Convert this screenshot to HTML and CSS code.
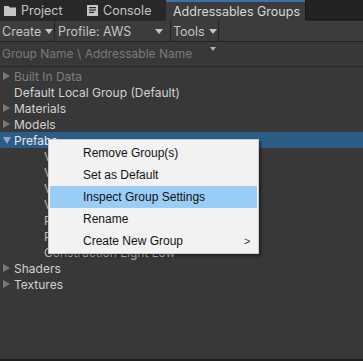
FILE: index.html
```html
<!DOCTYPE html>
<html>
<head>
<meta charset="utf-8">
<link rel="stylesheet" href="styles.css">
</head>
<body>
<div class="window">
  <div class="tabbar">
    <div class="tab">
      <svg class="ticon" width="12" height="10" viewBox="0 0 12 10"><path d="M0 0h4.5l1.5 1.5H12V10H0z" fill="#c4c4c4"/></svg>
      <span>Project</span>
    </div>
    <div class="tab">
      <svg class="ticon" width="11" height="11" viewBox="0 0 11 11"><rect x="0" y="0" width="11" height="11" fill="#c4c4c4"/><rect x="2" y="2" width="7" height="1.2" fill="#282828"/><rect x="2" y="4.4" width="7" height="1.2" fill="#282828"/><rect x="2" y="6.8" width="5" height="1.2" fill="#282828"/></svg>
      <span>Console</span>
    </div>
    <div class="tab active"><span>Addressables Groups</span></div>
    <div class="tabfill"></div>
  </div>
  <div class="toolbar">
    <div class="tbtn create">Create<i class="caret"></i></div>
    <div class="tbtn profile"><span>Profile: AWS</span><i class="caret"></i></div>
    <div class="tbtn tools">Tools<i class="caret"></i></div>
  </div>
  <div class="header">
    <span>Group Name \ Addressable Name</span>
    <i class="sort"></i>
  </div>
  <div class="tree">
    <div class="row dim"><i class="arrow"></i>Built In Data</div>
    <div class="row"><i class="noarrow"></i>Default Local Group (Default)</div>
    <div class="row"><i class="arrow"></i>Materials</div>
    <div class="row"><i class="arrow"></i>Models</div>
    <div class="row selected"><i class="arrow down"></i>Prefabs</div>
    <div class="row child">Vehicle</div>
    <div class="row child">Vehicle</div>
    <div class="row child">Vehicle</div>
    <div class="row child">Vehicle</div>
    <div class="row child">Prop</div>
    <div class="row child">Prop</div>
    <div class="row child">Construction Light Low</div>
    <div class="row"><i class="arrow"></i>Shaders</div>
    <div class="row"><i class="arrow"></i>Textures</div>
  </div>
  <div class="menu">
    <div class="mitem">Remove Group(s)</div>
    <div class="mitem">Set as Default</div>
    <div class="mitem hl">Inspect Group Settings</div>
    <div class="mitem">Rename</div>
    <div class="mitem sub">Create New Group<span class="chev">&gt;</span></div>
  </div>
</div>
</body>
</html>
```
FILE: styles.css
```css
html, body {
  margin: 0;
  padding: 0;
  background: #383838;
}
.window {
  position: relative;
  width: 363px;
  height: 361px;
  overflow: hidden;
  background: #383838;
  font-family: Inter, "Noto Sans", sans-serif;
  font-size: 12px;
  color: #d2d2d2;
  display: flex;
  flex-direction: column;
  border-bottom: 2px solid #1e1e1e;
  box-sizing: border-box;
}
.tabbar {
  height: 21px;
  display: flex;
  background: #282828;
  flex: none;
}
.tab {
  width: 83px;
  display: flex;
  align-items: center;
  gap: 5px;
  padding-left: 4px;
  box-sizing: border-box;
  color: #c4c4c4;
  font-size: 12.5px;
}
.ticon { flex: none; }
.tab.active {
  width: 139px;
  background: #3c3c3c;
  border-top: 2px solid #3a72b0;
  padding-left: 7px;
  color: #d8d8d8;
}
.tabfill {
  flex: 1;
  background: #232323;
  border-left: 1px solid #191919;
  border-bottom: 1px solid #191919;
  margin-bottom: 1px;
}
.toolbar {
  height: 20px;
  display: flex;
  background: #3c3c3c;
  border-bottom: 1px solid #232323;
  flex: none;
}
.tbtn {
  display: flex;
  align-items: center;
  border-right: 1px solid #232323;
  box-sizing: border-box;
  color: #c4c4c4;
  font-size: 12.5px;
}
.create { width: 55px; padding-left: 2px; gap: 3px; }
.profile { width: 116px; padding-left: 3px; justify-content: space-between; padding-right: 7px; }
.tools { width: 48px; padding-left: 2px; gap: 3px; }
.caret {
  display: inline-block;
  width: 0;
  height: 0;
  border-left: 4px solid transparent;
  border-right: 4px solid transparent;
  border-top: 5px solid #c4c4c4;
  margin-left: 1px;
}
.header {
  position: relative;
  height: 25px;
  display: flex;
  align-items: flex-end;
  padding: 0 0 5px 2px;
  box-sizing: border-box;
  color: #7a7a7a;
  font-size: 12px;
  border-bottom: 1px solid #262626;
  flex: none;
  background: #383838;
}
.sort {
  position: absolute;
  left: 210px;
  top: 5px;
  width: 0;
  height: 0;
  border-left: 3px solid transparent;
  border-right: 3px solid transparent;
  border-top: 4px solid #b0b0b0;
}
.tree {
  padding-top: 1px;
  display: flex;
  flex-direction: column;
}
.row {
  height: 16px;
  flex: none;
  display: flex;
  align-items: center;
  padding-left: 3px;
  color: #d2d2d2;
  white-space: nowrap;
}
.row.dim { color: #7f7f7f; }
.row.selected { background: #2c5d87; color: #e8e8e8; }
.row.child { padding-left: 44px; color: #bdbdbd; }
.arrow {
  display: inline-block;
  width: 0;
  height: 0;
  border-top: 4px solid transparent;
  border-bottom: 4px solid transparent;
  border-left: 7px solid #7a7a7a;
  margin-right: 4px;
}
.arrow.down {
  border-left: 4px solid transparent;
  border-right: 4px solid transparent;
  border-top: 7px solid #8fa9c2;
  border-bottom: 0;
  margin-right: 3px;
}
.noarrow { display: inline-block; width: 11px; }
.menu {
  position: absolute;
  left: 48px;
  top: 139px;
  width: 211px;
  box-sizing: border-box;
  background: #f2f2f2;
  border: 1px solid #cccccc;
  padding: 2px 1px 1px;
  font-family: "Liberation Sans", Arial, sans-serif;
  font-size: 12px;
  color: #111;
  box-shadow: 2px 2px 3px rgba(0,0,0,0.45);
  display: flex;
  flex-direction: column;
}
.mitem {
  height: 22px;
  flex: none;
  display: flex;
  align-items: center;
  padding-left: 33px;
  position: relative;
}
.mitem.hl { background: #99cdf5; }
.chev {
  position: absolute;
  left: 194px;
  font-size: 11px;
  color: #333;
}
```
